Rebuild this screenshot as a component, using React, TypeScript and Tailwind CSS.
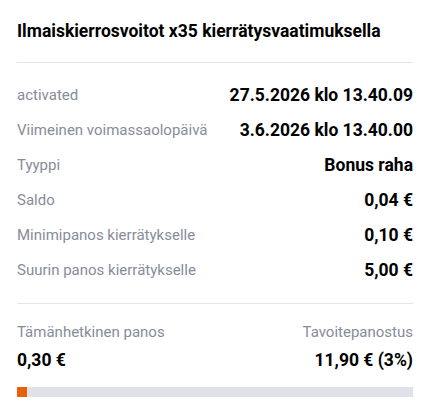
const rows = [
  { label: "activated", value: "27.5.2026 klo 13.40.09" },
  { label: "Viimeinen voimassaolopäivä", value: "3.6.2026 klo 13.40.00" },
  { label: "Tyyppi", value: "Bonus raha" },
  { label: "Saldo", value: "0,04 €" },
  { label: "Minimipanos kierrätykselle", value: "0,10 €" },
  { label: "Suurin panos kierrätykselle", value: "5,00 €" },
];

const current = 0.3;
const target = 11.9;

export default function App() {
  const pct = Math.round((current / target) * 100);

  return (
    <div className="min-h-[415px] w-[427px] bg-white pl-[17px] pr-[14px] font-['Roboto',sans-serif] text-black">
      <h1 className="pt-[19px] pb-[19px] text-[17.5px] font-bold leading-[24px]">
        Ilmaiskierrosvoitot x35 kierrätysvaatimuksella
      </h1>
      <div className="h-px bg-[#e3e5ec]" />

      <div className="flex flex-col py-[15px]">
        {rows.map((row) => (
          <div key={row.label} className="flex h-[35px] items-center justify-between">
            <span className="text-[15px] text-[#878c9a]">{row.label}</span>
            <span className="text-[17.5px] font-bold">{row.value}</span>
          </div>
        ))}
      </div>

      <div className="h-px bg-[#e3e5ec]" />

      <div className="flex justify-between pt-[18px]">
        <div className="flex flex-col gap-[6px]">
          <span className="text-[15px] leading-[20px] text-[#878c9a]">Tämänhetkinen panos</span>
          <span className="text-[17.5px] font-bold leading-[24px]">0,30 €</span>
        </div>
        <div className="flex flex-col items-end gap-[6px]">
          <span className="text-[15px] leading-[20px] text-[#878c9a]">Tavoitepanostus</span>
          <span className="text-[17.5px] font-bold leading-[24px]">11,90 € ({pct}%)</span>
        </div>
      </div>

      <div className="mt-[15px] h-[10px] bg-[#dfe2e9]">
        <div className="h-full bg-[#e8600c]" style={{ width: `${(current / target) * 100}%` }} />
      </div>
    </div>
  );
}
